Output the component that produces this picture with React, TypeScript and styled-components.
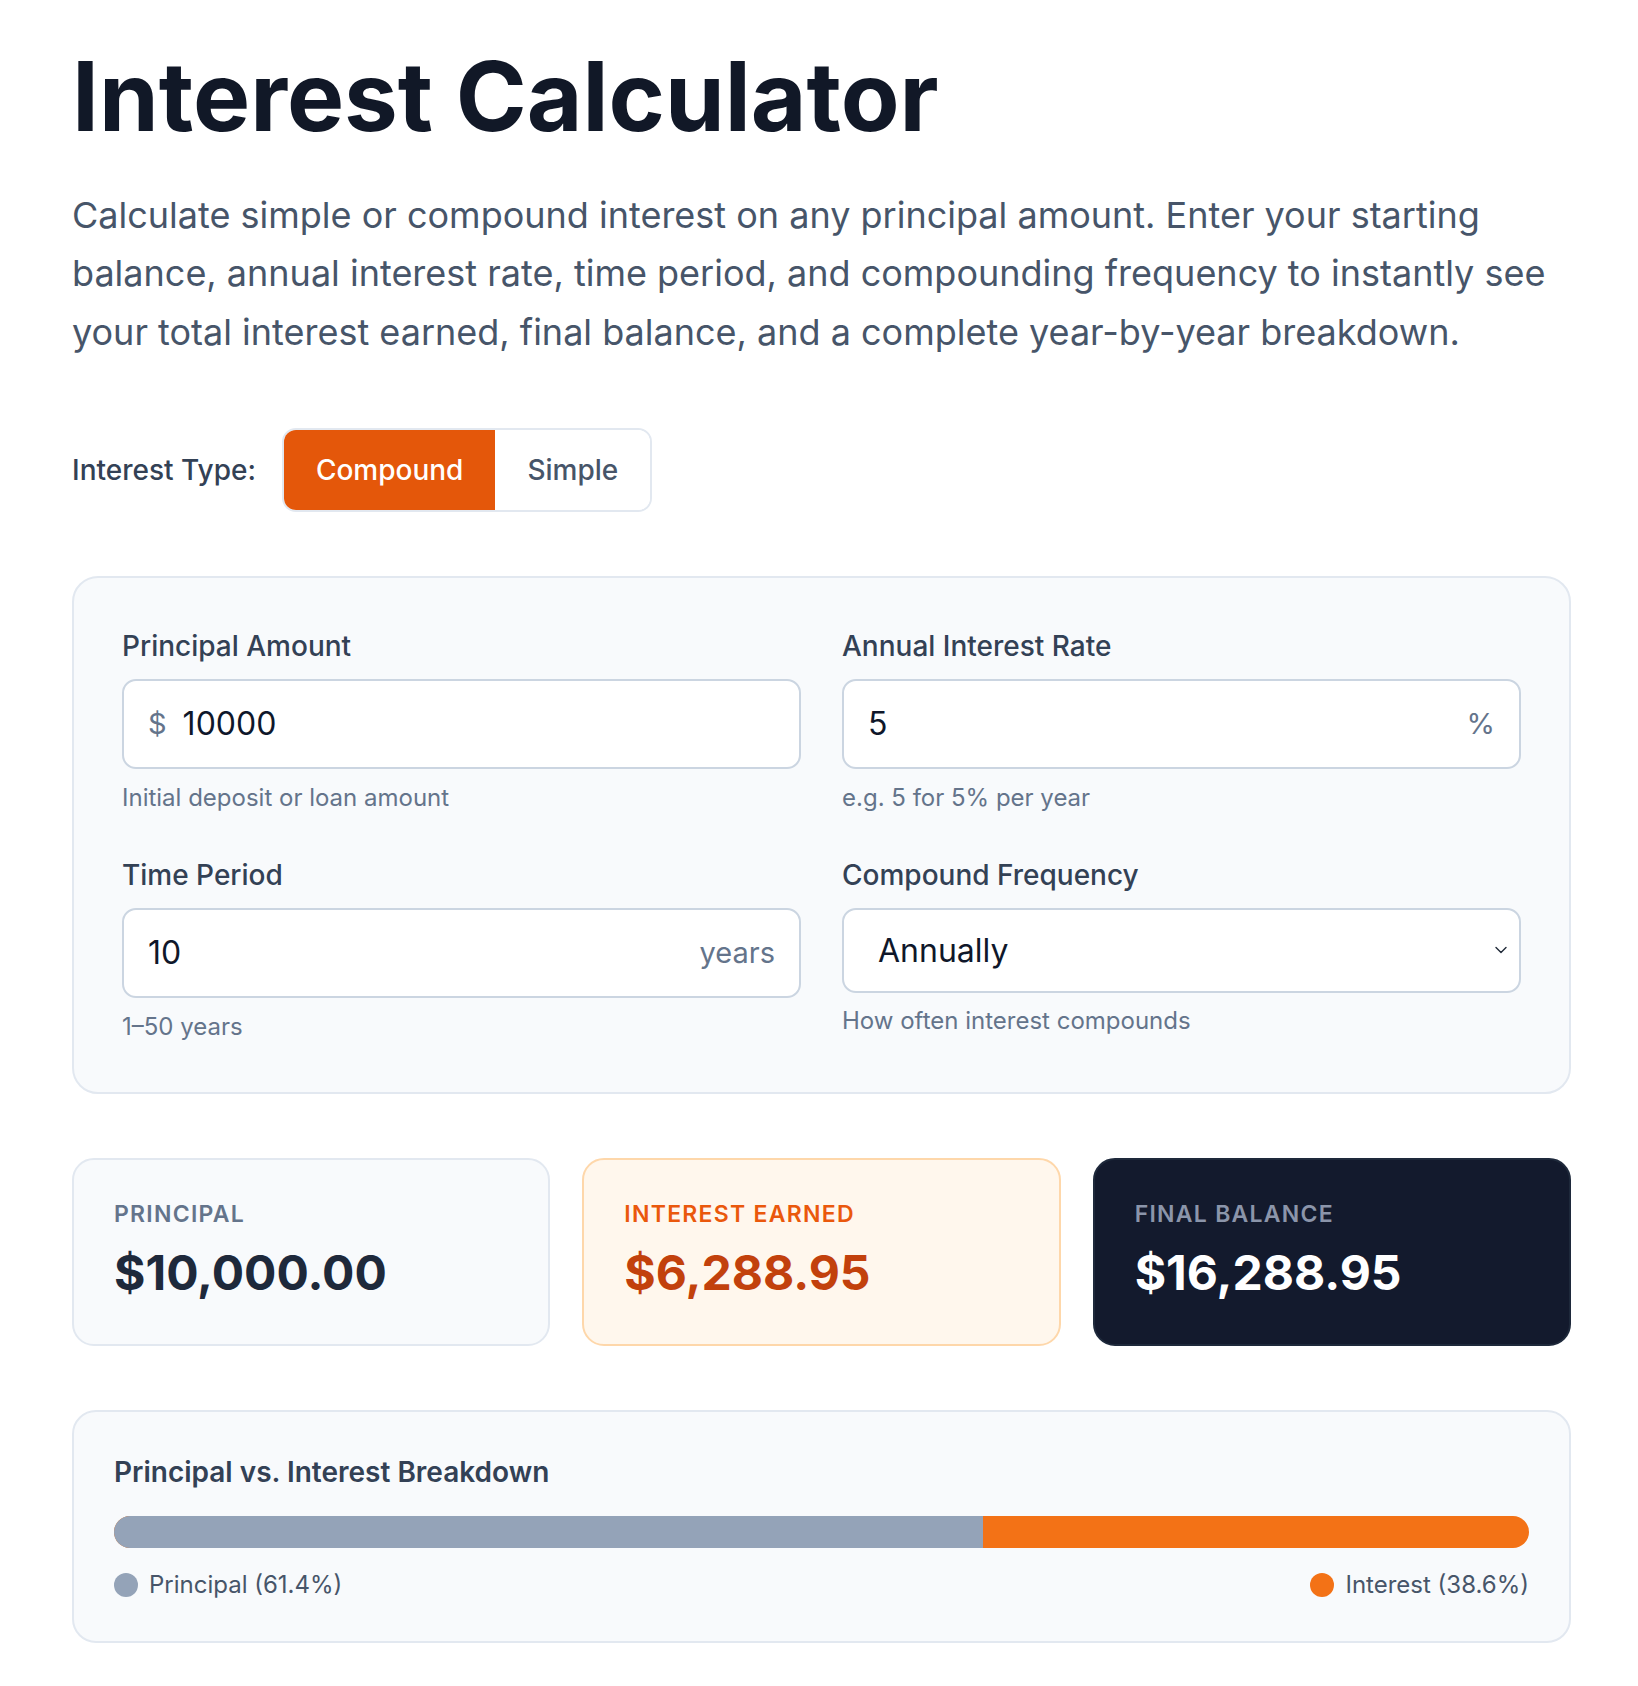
import React from 'react';
import styled, { createGlobalStyle } from 'styled-components';

const GlobalStyle = createGlobalStyle`
  * { box-sizing: border-box; }
  body {
    margin: 0;
    background: #ffffff;
    font-family: Inter, "Noto Sans", "Liberation Sans", sans-serif;
    color: #0f172a;
  }
`;

const Page = styled.main`
  padding: 44px 67px 48px 72px;
  display: flex;
  flex-direction: column;
`;

const Title = styled.h1`
  margin: 0;
  font-size: 96px;
  line-height: 1.1;
  font-weight: 700;
  letter-spacing: 0;
  color: #111827;
`;

const Intro = styled.p`
  margin: 36px 0 0;
  max-width: 1490px;
  font-size: 36px;
  line-height: 58.6px;
  color: #475569;
`;

const TypeRow = styled.div`
  margin-top: 67px;
  display: flex;
  align-items: center;
  gap: 26px;
`;

const TypeLabel = styled.span`
  font-size: 28px;
  font-weight: 500;
  color: #334155;
`;

const Toggle = styled.div`
  display: flex;
  border: 2px solid #e2e8f0;
  border-radius: 14px;
  overflow: hidden;
  height: 84px;
`;

const ToggleButton = styled.button<{ $active: boolean }>`
  border: 0;
  padding: 0 32px;
  font-family: inherit;
  font-size: 28px;
  font-weight: 500;
  background: ${p => (p.$active ? '#e4570a' : '#ffffff')};
  color: ${p => (p.$active ? '#ffffff' : '#475569')};
  cursor: pointer;
`;

const Panel = styled.section`
  margin-top: 64px;
  background: #f8fafc;
  border: 2px solid #e2e8f0;
  border-radius: 26px;
  padding: 52px 48px 50px;
  display: grid;
  grid-template-columns: 1fr 1fr;
  column-gap: 41px;
  row-gap: 46px;
`;

const Field = styled.div`
  display: flex;
  flex-direction: column;
`;

const Label = styled.label`
  font-size: 28px;
  line-height: 1.2;
  font-weight: 500;
  color: #334155;
  margin-bottom: 15px;
`;

const InputBox = styled.div<{ $height?: number; $right?: number }>`
  height: ${p => p.$height ?? 90}px;
  background: #ffffff;
  border: 2px solid #cbd5e1;
  border-radius: 14px;
  display: flex;
  align-items: center;
  padding: 0 ${p => p.$right ?? 24}px 0 24px;
  gap: 16px;
`;

const Affix = styled.span`
  font-size: 29px;
  color: #64748b;
`;

const Input = styled.input`
  flex: 1;
  min-width: 0;
  border: 0;
  outline: none;
  background: transparent;
  font-family: inherit;
  font-size: 32px;
  color: #0f172a;
  padding: 0;
`;

const Select = styled.select`
  flex: 1;
  min-width: 0;
  border: 0;
  outline: none;
  background: transparent;
  appearance: none;
  font-family: inherit;
  font-size: 32px;
  color: #0f172a;
  padding: 0 0 0 10px;
`;

const Hint = styled.span<{ $gap?: number }>`
  margin-top: ${p => p.$gap ?? 13}px;
  font-size: 24px;
  line-height: 1.3;
  color: #64748b;
`;

const Stats = styled.section`
  margin-top: 64px;
  display: grid;
  grid-template-columns: repeat(3, 1fr);
  gap: 32px;
`;

type Tone = 'plain' | 'warm' | 'dark';

const statTheme = {
  plain: { bg: '#f8fafc', border: '#e2e8f0', label: '#64748b', value: '#1e293b' },
  warm: { bg: '#fff7ed', border: '#fed7aa', label: '#ea580c', value: '#c2410c' },
  dark: { bg: '#131a2d', border: '#1e293b', label: '#8b95aa', value: '#ffffff' },
};

const StatCard = styled.div<{ $tone: Tone }>`
  background: ${p => statTheme[p.$tone].bg};
  border: 2px solid ${p => statTheme[p.$tone].border};
  border-radius: 22px;
  padding: 41px 40px 43px;
  display: flex;
  flex-direction: column;
  gap: 15px;
`;

const StatLabel = styled.span<{ $tone: Tone }>`
  font-size: 23px;
  line-height: 1.2;
  font-weight: 600;
  letter-spacing: 0.055em;
  text-transform: uppercase;
  color: ${p => statTheme[p.$tone].label};
`;

const StatValue = styled.span<{ $tone: Tone }>`
  font-size: 48px;
  line-height: 1.2;
  font-weight: 700;
  color: ${p => statTheme[p.$tone].value};
`;

const Breakdown = styled.section`
  margin-top: 64px;
  background: #f8fafc;
  border: 2px solid #e2e8f0;
  border-radius: 24px;
  padding: 44px 40px 41px;
  display: flex;
  flex-direction: column;
`;

const BreakdownTitle = styled.h2`
  margin: 0;
  font-size: 28px;
  line-height: 1.2;
  font-weight: 600;
  color: #334155;
`;

const Bar = styled.div`
  margin-top: 26px;
  height: 32px;
  border-radius: 16px;
  overflow: hidden;
  display: flex;
  background: #f37216;
`;

const BarPart = styled.div<{ $color: string }>`
  height: 100%;
  background: ${p => p.$color};
`;

const Legend = styled.div`
  margin-top: 22px;
  display: flex;
  justify-content: space-between;
`;

const LegendItem = styled.span`
  display: flex;
  align-items: center;
  gap: 11px;
  font-size: 24px;
  line-height: 1.25;
  color: #475569;
`;

const Dot = styled.span<{ $color: string }>`
  width: 24px;
  height: 24px;
  border-radius: 50%;
  background: ${p => p.$color};
`;

const Chevron = () => (
  <svg width="12" height="8" viewBox="0 0 12 8" fill="none" aria-hidden>
    <path d="M1 1.5l5 5 5-5" stroke="#1f2937" strokeWidth="1.4" strokeLinecap="round" strokeLinejoin="round" />
  </svg>
);

export default function App() {
  const principal = 10000;
  const interest = 6288.95;
  const total = principal + interest;
  const principalShare = (principal / total) * 100;

  return (
    <>
      <GlobalStyle />
      <Page>
        <Title>Interest Calculator</Title>
        <Intro>
          Calculate simple or compound interest on any principal amount. Enter your starting
          balance, annual interest rate, time period, and compounding frequency to instantly see
          your total interest earned, final balance, and a complete year-by-year breakdown.
        </Intro>

        <TypeRow>
          <TypeLabel>Interest Type:</TypeLabel>
          <Toggle>
            <ToggleButton $active>Compound</ToggleButton>
            <ToggleButton $active={false}>Simple</ToggleButton>
          </Toggle>
        </TypeRow>

        <Panel>
          <Field>
            <Label>Principal Amount</Label>
            <InputBox>
              <Affix>$</Affix>
              <Input defaultValue="10000" />
            </InputBox>
            <Hint>Initial deposit or loan amount</Hint>
          </Field>
          <Field>
            <Label>Annual Interest Rate</Label>
            <InputBox>
              <Input defaultValue="5" />
              <Affix>%</Affix>
            </InputBox>
            <Hint>e.g. 5 for 5% per year</Hint>
          </Field>
          <Field>
            <Label>Time Period</Label>
            <InputBox>
              <Input defaultValue="10" />
              <Affix>years</Affix>
            </InputBox>
            <Hint>1–50 years</Hint>
          </Field>
          <Field>
            <Label>Compound Frequency</Label>
            <InputBox $height={85} $right={12}>
              <Select defaultValue="annually">
                <option value="annually">Annually</option>
                <option value="semiannually">Semi-annually</option>
                <option value="quarterly">Quarterly</option>
                <option value="monthly">Monthly</option>
                <option value="daily">Daily</option>
              </Select>
              <Chevron />
            </InputBox>
            <Hint $gap={12}>How often interest compounds</Hint>
          </Field>
        </Panel>

        <Stats>
          <StatCard $tone="plain">
            <StatLabel $tone="plain">Principal</StatLabel>
            <StatValue $tone="plain">$10,000.00</StatValue>
          </StatCard>
          <StatCard $tone="warm">
            <StatLabel $tone="warm">Interest Earned</StatLabel>
            <StatValue $tone="warm">$6,288.95</StatValue>
          </StatCard>
          <StatCard $tone="dark">
            <StatLabel $tone="dark">Final Balance</StatLabel>
            <StatValue $tone="dark">$16,288.95</StatValue>
          </StatCard>
        </Stats>

        <Breakdown>
          <BreakdownTitle>Principal vs. Interest Breakdown</BreakdownTitle>
          <Bar>
            <BarPart $color="#94a3b8" style={{ width: `${principalShare}%` }} />
          </Bar>
          <Legend>
            <LegendItem>
              <Dot $color="#94a3b8" />
              Principal (61.4%)
            </LegendItem>
            <LegendItem>
              <Dot $color="#f37216" />
              Interest (38.6%)
            </LegendItem>
          </Legend>
        </Breakdown>
      </Page>
    </>
  );
}
